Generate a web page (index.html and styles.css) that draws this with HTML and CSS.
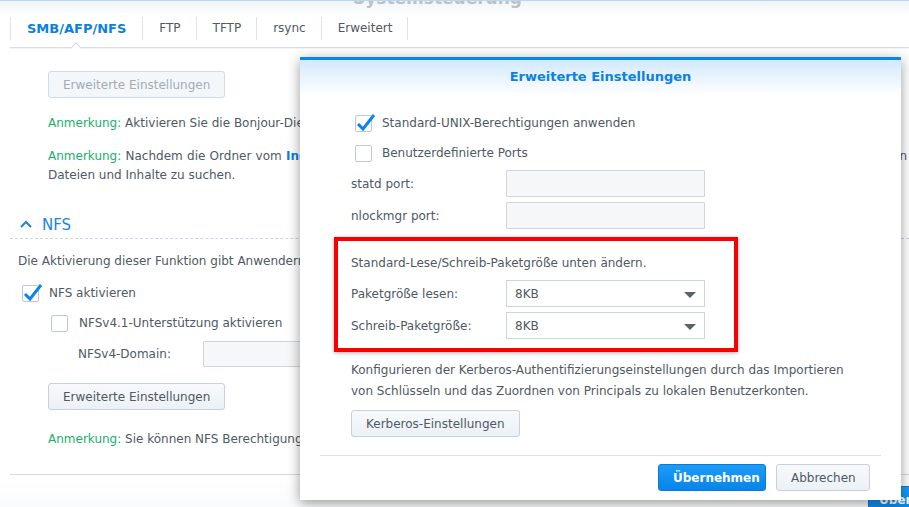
FILE: index.html
```html
<!DOCTYPE html>
<html lang="de">
<head>
<meta charset="utf-8">
<title>Systemsteuerung</title>
<link rel="stylesheet" href="styles.css">
</head>
<body>
<div class="window">
  <div class="titlebar"><span class="wtitle">Systemsteuerung</span></div>
  <div class="tabs">
    <div class="tab active">SMB/AFP/NFS</div>
    <div class="tab">FTP</div>
    <div class="tab">TFTP</div>
    <div class="tab">rsync</div>
    <div class="tab">Erweitert</div>
    <span class="notch"></span>
  </div>
  <div class="content">
    <div class="smb">
      <button class="btn disabled">Erweiterte Einstellungen</button>
      <p class="note n1"><span class="g">Anmerkung:</span> Aktivieren Sie die Bonjour-Dienst-Erkennung, damit Mac-Computer den Server finden.</p>
      <div class="note n2">
        <span class="l1"><span class="g">Anmerkung:</span> Nachdem die Ordner vom <b class="lnk">Indexdienst</b> indiziert wurden, können Sie Spotlight auf den Mac-Rechnern verwenden, um nach ihren</span>
        <span class="l2">Dateien und Inhalte zu suchen.</span>
      </div>
    </div>
    <div class="shead">
      <svg class="chev" width="12" height="8" viewBox="0 0 12 8"><polyline points="1,7 6,2 11,7" fill="none" stroke="#1a86e3" stroke-width="2"/></svg>
      <span>NFS</span>
    </div>
    <div class="nfs">
      <p class="desc">Die Aktivierung dieser Funktion gibt Anwendern die Möglichkeit, auf Daten zuzugreifen.</p>
      <div class="cbrow r1">
        <span class="cb checked"><svg width="20" height="20" viewBox="0 0 20 20"><polyline points="2,9 7,14 18,0" fill="none" stroke="#0a84ee" stroke-width="3"/></svg></span>
        <span>NFS aktivieren</span>
      </div>
      <div class="cbrow r2">
        <span class="cb"></span>
        <span>NFSv4.1-Unterstützung aktivieren</span>
      </div>
      <div class="frow dom">
        <span class="flabel">NFSv4-Domain:</span>
        <span class="input"></span>
      </div>
      <button class="btn adv">Erweiterte Einstellungen</button>
      <p class="note n3"><span class="g">Anmerkung:</span> Sie können NFS Berechtigungen in den Freigabeordner-Einstellungen bearbeiten.</p>
    </div>
  </div>
  <div class="wfooter">
    <button class="btn primary wapply">Übernehmen</button>
  </div>
</div>

<div class="dialog">
  <div class="dhead">Erweiterte Einstellungen</div>
  <div class="dbody">
    <div class="cbrow d">
      <span class="cb checked"><svg width="20" height="20" viewBox="0 0 20 20"><polyline points="2,9 7,14 18,0" fill="none" stroke="#0a84ee" stroke-width="3"/></svg></span>
      <span>Standard-UNIX-Berechtigungen anwenden</span>
    </div>
    <div class="cbrow d">
      <span class="cb"></span>
      <span>Benutzerdefinierte Ports</span>
    </div>
    <div class="frow df first">
      <span class="flabel">statd port:</span>
      <span class="input dis"></span>
    </div>
    <div class="frow df">
      <span class="flabel">nlockmgr port:</span>
      <span class="input dis"></span>
    </div>
    <div class="redbox">
      <p class="rtext">Standard-Lese/Schreib-Paketgröße unten ändern.</p>
      <div class="frow rf">
        <span class="flabel">Paketgröße lesen:</span>
        <span class="select">8KB<i class="arrow"></i></span>
      </div>
      <div class="frow rf">
        <span class="flabel">Schreib-Paketgröße:</span>
        <span class="select">8KB<i class="arrow"></i></span>
      </div>
    </div>
    <p class="ktext">Konfigurieren der Kerberos-Authentifizierungseinstellungen durch das Importieren<br>von Schlüsseln und das Zuordnen von Principals zu lokalen Benutzerkonten.</p>
    <button class="btn kbtn">Kerberos-Einstellungen</button>
    <div class="dfooter">
      <button class="btn primary apply">Übernehmen</button>
      <button class="btn cancel">Abbrechen</button>
    </div>
  </div>
</div>
</body>
</html>
```

FILE: styles.css
```css
* { box-sizing: border-box; }
body {
  margin: 0;
  width: 909px;
  height: 507px;
  overflow: hidden;
  position: relative;
  background: #fff;
  font-family: "DejaVu Sans", Verdana, sans-serif;
  font-size: 12px;
  color: #4e5964;
}
p { margin: 0; }

.window { position: relative; height: 507px; }

.titlebar {
  height: 16px;
  border-top: 1px solid #b6d6f4;
  background: linear-gradient(#f1f4f7, #fff);
  overflow: hidden;
  text-align: center;
  padding-right: 34px;
}
.wtitle {
  display: block;
  font-weight: bold;
  font-size: 17px;
  line-height: 18px;
  margin-top: -12px;
  color: #bcc2c8;
}

.tabs {
  position: relative;
  display: flex;
  margin-left: 10px;
  padding-top: 1px;
  height: 32px;
  border-bottom: 1px solid #d7dde3;
  box-shadow: 0 1px 1px rgba(0,0,0,0.04);
}
.tab {
  height: 23px;
  line-height: 23px;
  padding: 0 15px 0 16px;
  border-right: 1px solid #dde3e9;
  font-size: 12px;
  color: #4e5964;
}
.tab:first-child { border-left: 1px solid #dde3e9; }
.tab.active { color: #0b80e4; font-weight: bold; font-size: 13px; padding: 0 16px; }
.notch {
  position: absolute;
  left: 62px;
  bottom: -5px;
  width: 8px;
  height: 8px;
  background: #fff;
  border-top: 1px solid #d2d8df;
  border-left: 1px solid #d2d8df;
  transform: rotate(45deg);
}

.content {
  margin-left: 10px;
  height: 427px;
  border-bottom: 1px solid #d6dadf;
  box-shadow: 0 1px 1px rgba(0,0,0,0.05);
}
.smb { padding-left: 38px; padding-top: 23px; }

.btn {
  display: block;
  height: 27px;
  padding: 0 14px;
  border: 1px solid #c6d1dc;
  border-radius: 3px;
  background: linear-gradient(#f7f9fc, #ecf1f6);
  font-family: inherit;
  font-size: 12px;
  color: #4e5964;
}
.btn.disabled { color: #a3acb6; border-color: #d3dbe4; background: #f4f7fa; }

.note { line-height: 19px; white-space: nowrap; }
.n1 { margin-top: 16px; }
.n2 { margin-top: 14px; }
.n2 .l1 { display: block; width: 859px; text-align: justify; text-align-last: justify; }
.n2 .l2 { display: block; }
.g { color: #17b06b; }
.lnk { color: #0b7fe3; }

.shead {
  margin-top: 30px;
  height: 24px;
  padding-left: 10px;
  padding-bottom: 4px;
  border-bottom: 1px dashed #c8d5e3;
  display: flex;
  align-items: center;
  font-size: 15px;
  color: #1a86e3;
}
.chev { margin-right: 10px; margin-top: -1px; }

.nfs { padding-left: 8px; }
.desc { margin-top: 13px; line-height: 19px; white-space: nowrap; }

.cbrow { display: flex; align-items: center; height: 30px; white-space: nowrap; }
.cb {
  position: relative;
  flex: none;
  width: 17px;
  height: 17px;
  border: 1px solid #bfc9d3;
  border-radius: 2px;
  background: #fff;
  margin-right: 10px;
}
.cb svg { position: absolute; left: 0; top: -1px; overflow: visible; }
.r1 { margin-top: 7px; padding-left: 4px; }
.r2 { padding-left: 33px; }
.r2 .cb { margin-right: 11px; }

.frow { display: flex; align-items: center; white-space: nowrap; }
.flabel { flex: none; }
.input {
  display: block;
  height: 27px;
  border: 1px solid #cdd6df;
  background: #f5f7f9;
  border-radius: 1px;
}
.dom { margin-top: 3px; padding-left: 60px; }
.dom .flabel { width: 125px; }
.dom .input { width: 160px; height: 26px; }
.adv { margin-top: 16px; margin-left: 30px; }
.n3 { margin-top: 20px; margin-left: 30px; }

.wfooter {
  display: flex;
  justify-content: flex-end;
  padding-top: 11px;
  height: 32px;
  background: linear-gradient(#fff, #fafbfc);
}
.btn.primary {
  color: #fff;
  border-color: #0a79d8;
  background: linear-gradient(#1c9cf6, #0784ea);
  font-weight: bold;
}
.wapply { width: 108px; margin-right: -67px; flex: none; text-align: left; padding-left: 10px; }

.dialog {
  position: absolute;
  left: 300px;
  top: 57px;
  width: 601px;
  height: 443px;
  border-top: 3px solid #0a84ee;
  background: #fff;
  box-shadow: 0 3px 12px rgba(0,0,0,0.4);
}
.dhead {
  height: 35px;
  line-height: 33px;
  text-align: center;
  font-weight: bold;
  font-size: 13px;
  color: #0b80e4;
  background: linear-gradient(#d2e9fc, #fff);
}
.dbody { padding: 13px 20px 0; }
.cbrow.d { padding-left: 35px; }
.df { padding-left: 31px; }
.df .flabel, .rf .flabel { width: 155px; }
.df .input { width: 199px; }
.df.first { margin-top: 2px; }
.df + .df { margin-top: 5px; }

.redbox {
  margin-top: 8px;
  margin-left: 14px;
  width: 404px;
  border: 4px solid #f80000;
  padding: 12px 13px 9px;
  box-shadow: 0 1px 4px rgba(0,0,0,0.3);
}
.rtext { line-height: 20px; }
.rf { margin-top: 7px; }
.rf + .rf { margin-top: 5px; }
.select {
  position: relative;
  display: flex;
  align-items: center;
  width: 199px;
  height: 27px;
  padding-left: 8px;
  border: 1px solid #cbd5df;
  background: #fff;
  color: #4e5964;
}
.arrow {
  position: absolute;
  right: 8px;
  top: 11px;
  width: 0;
  height: 0;
  border-left: 6px solid transparent;
  border-right: 6px solid transparent;
  border-top: 6px solid #59636d;
}

.ktext { margin-top: 8px; padding-left: 31px; line-height: 21px; white-space: nowrap; }
.kbtn { margin-top: 8px; margin-left: 31px; }

.dfooter {
  margin-top: 18px;
  border-top: 1px solid #dfe3e8;
  padding: 8px 11px 0 0;
  display: flex;
  justify-content: flex-end;
  gap: 10px;
}
.apply { width: 108px; }
.cancel { width: 94px; }
```
